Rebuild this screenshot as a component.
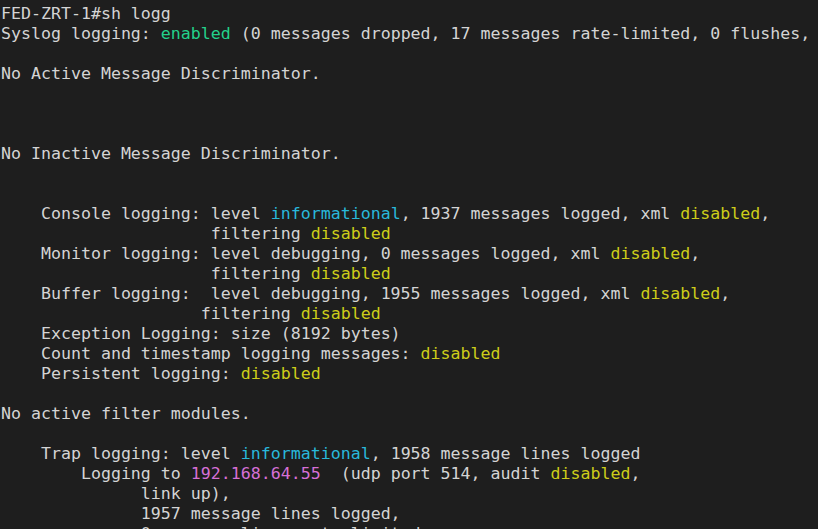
const G = ({ children }: { children: React.ReactNode }) => <span className="text-[#23d18b]">{children}</span>;
const C = ({ children }: { children: React.ReactNode }) => <span className="text-[#29b8db]">{children}</span>;
const Y = ({ children }: { children: React.ReactNode }) => <span className="text-[#cdcd1a]">{children}</span>;
const M = ({ children }: { children: React.ReactNode }) => <span className="text-[#d670d6]">{children}</span>;

export default function App() {
  return (
    <div className="w-[818px] h-[529px] overflow-hidden bg-[#1e1e1e]">
      <pre className="pl-px pt-[4px] text-[16.6px] leading-[20px] text-[#d4d4d4] whitespace-pre font-['DejaVu_Sans_Mono',monospace]">
        {"FED-ZRT-1#sh logg\n"}
        {"Syslog logging: "}<G>enabled</G>{" (0 messages dropped, 17 messages rate-limited, 0 flushes, 0 overruns, xml disabled, filtering disabled)\n"}
        {"\n"}
        {"No Active Message Discriminator.\n"}
        {"\n\n\n"}
        {"No Inactive Message Discriminator.\n"}
        {"\n\n"}
        {"    Console logging: level "}<C>informational</C>{", 1937 messages logged, xml "}<Y>disabled</Y>{",\n"}
        {"                     filtering "}<Y>disabled</Y>{"\n"}
        {"    Monitor logging: level debugging, 0 messages logged, xml "}<Y>disabled</Y>{",\n"}
        {"                     filtering "}<Y>disabled</Y>{"\n"}
        {"    Buffer logging:  level debugging, 1955 messages logged, xml "}<Y>disabled</Y>{",\n"}
        {"                    filtering "}<Y>disabled</Y>{"\n"}
        {"    Exception Logging: size (8192 bytes)\n"}
        {"    Count and timestamp logging messages: "}<Y>disabled</Y>{"\n"}
        {"    Persistent logging: "}<Y>disabled</Y>{"\n"}
        {"\n"}
        {"No active filter modules.\n"}
        {"\n"}
        {"    Trap logging: level "}<C>informational</C>{", 1958 message lines logged\n"}
        {"        Logging to "}<M>192.168.64.55</M>{"  (udp port 514, audit "}<Y>disabled</Y>{",\n"}
        {"              link up),\n"}
        {"              1957 message lines logged,\n"}
        {"              0 message lines rate-limited,\n"}
      </pre>
    </div>
  );
}
